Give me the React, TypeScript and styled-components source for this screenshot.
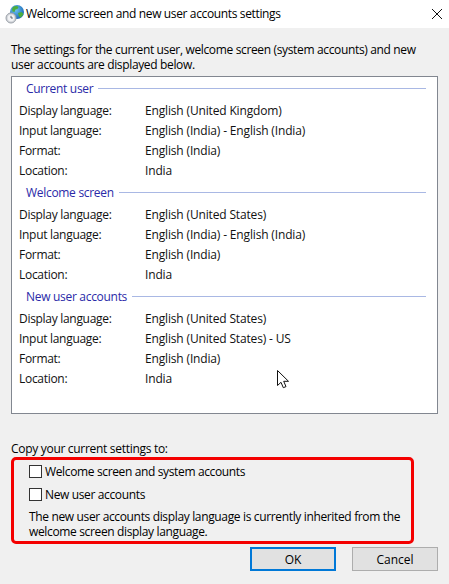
import styled, { createGlobalStyle } from 'styled-components';

const GlobalStyle = createGlobalStyle`
  html, body {
    margin: 0;
    padding: 0;
    background: #f0f0f0;
  }
  body {
    font-family: 'Open Sans', 'Noto Sans', 'Liberation Sans', sans-serif;
    font-size: 12px;
    color: #000;
  }
`;

interface GroupType {
  title: string;
  rows: [string, string][];
}

const groups: GroupType[] = [
  {
    title: 'Current user',
    rows: [
      ['Display language:', 'English (United Kingdom)'],
      ['Input language:', 'English (India) - English (India)'],
      ['Format:', 'English (India)'],
      ['Location:', 'India'],
    ],
  },
  {
    title: 'Welcome screen',
    rows: [
      ['Display language:', 'English (United States)'],
      ['Input language:', 'English (India) - English (India)'],
      ['Format:', 'English (India)'],
      ['Location:', 'India'],
    ],
  },
  {
    title: 'New user accounts',
    rows: [
      ['Display language:', 'English (United States)'],
      ['Input language:', 'English (United States) - US'],
      ['Format:', 'English (India)'],
      ['Location:', 'India'],
    ],
  },
];

const Dialog = styled.div`
  width: 449px;
  height: 584px;
  display: flex;
  flex-direction: column;
  overflow: hidden;
  background: #f0f0f0;
`;

const TitleBar = styled.div`
  height: 28px;
  flex: none;
  display: flex;
  align-items: center;
  background: #fff;
  padding: 0 7px 0 5px;
  gap: 1px;
`;

const TitleText = styled.span`
  flex: 1;
  line-height: 26px;
  letter-spacing: -0.36px;
`;

const Body = styled.div`
  flex: 1;
  display: flex;
  flex-direction: column;
  padding: 14px 11px 0;
`;

const Intro = styled.p`
  margin: 0 0 4px;
  line-height: 15px;
  letter-spacing: -0.35px;
  white-space: nowrap;
`;

const Panel = styled.div`
  height: 338px;
  box-sizing: border-box;
  flex: none;
  background: #fff;
  border: 1px solid #828790;
  padding: 1px 11px 0 7px;
`;

const GroupHeader = styled.div`
  height: 20px;
  margin-bottom: 3px;
  display: flex;
  align-items: center;
  gap: 5px;
  padding: 0 0 0 7px;
  color: #2a2aa8;
  letter-spacing: -0.3px;
`;

const GroupRule = styled.span`
  flex: 1;
  height: 1px;
  background: #a9b8e4;
`;

const Group = styled.section`
  margin-bottom: 1px;
`;

const Row = styled.div`
  display: grid;
  grid-template-columns: 126px 1fr;
  height: 20px;
  line-height: 20px;
  color: #111;
`;

const RowLabel = styled.span`
  letter-spacing: -0.3px;
`;

const RowValue = styled.span`
  letter-spacing: -0.16px;
`;

const Pointer = styled.svg`
  position: absolute;
  left: 277px;
  top: 370px;
`;

const CopyLabel = styled.div`
  margin-top: 27px;
  line-height: 16px;
  letter-spacing: -0.3px;
`;

const Highlight = styled.div`
  box-sizing: border-box;
  width: 403px;
  height: 87px;
  border: 3px solid #f40000;
  border-radius: 5px;
  padding: 3px 0 0 15px;
`;

const CheckRow = styled.label`
  display: flex;
  align-items: center;
  gap: 3px;
  height: 16px;
  margin-bottom: 7px;
  letter-spacing: -0.36px;
`;

const CheckBox = styled.span`
  box-sizing: border-box;
  flex: none;
  width: 13px;
  height: 13px;
  background: #fff;
  border: 1px solid #333;
`;

const Note = styled.p`
  margin: 0;
  line-height: 15px;
  letter-spacing: -0.35px;
  white-space: nowrap;
`;

const Buttons = styled.div`
  display: flex;
  justify-content: flex-end;
  gap: 16px;
  margin-top: 3px;
`;

const Button = styled.button<{ $primary?: boolean }>`
  box-sizing: border-box;
  width: 86px;
  height: 24px;
  padding: 0;
  font: inherit;
  color: #000;
  background: #e1e1e1;
  border: ${({ $primary }) => ($primary ? '2px solid #0078d7' : '1px solid #adadad')};
`;

function GlobeIcon() {
  return (
    <svg width="20" height="20" viewBox="0 0 20 20">
      <defs>
        <radialGradient id="globe" cx="0.4" cy="0.35" r="0.75">
          <stop offset="0" stopColor="#6fc3f2" />
          <stop offset="1" stopColor="#0f5fb0" />
        </radialGradient>
      </defs>
      <circle cx="12" cy="8" r="7" fill="url(#globe)" />
      <path d="M8 3c2-1.300 4-1.300 5.500 0l-1 2-2 .5-1 2.500-2-.5-.5-2.500zM13 9l3.500-1 2 2-2.500 3.500-2-1z" fill="#4cae3c" />
      <circle cx="6" cy="14" r="5" fill="#d5d8dc" stroke="#9aa0a8" />
      <circle cx="6" cy="14" r="3.200" fill="#f2f3f5" />
      <path d="M6 11.800V14h1.800" fill="none" stroke="#59626c" />
    </svg>
  );
}

function CloseIcon() {
  return (
    <svg width="10" height="10" viewBox="0 0 10 10">
      <path d="M0 0l10 10M10 0L0 10" stroke="#111" strokeWidth="1" />
    </svg>
  );
}

export default function App() {
  return (
    <Dialog>
      <GlobalStyle />
      <TitleBar>
        <GlobeIcon />
        <TitleText>Welcome screen and new user accounts settings</TitleText>
        <CloseIcon />
      </TitleBar>
      <Body>
        <Intro>
          The settings for the current user, welcome screen (system accounts) and new
          <br />
          user accounts are displayed below.
        </Intro>
        <Panel>
          {groups.map((group) => (
            <Group key={group.title}>
              <GroupHeader>
                {group.title}
                <GroupRule />
              </GroupHeader>
              {group.rows.map(([label, value]) => (
                <Row key={label}>
                  <RowLabel>{label}</RowLabel>
                  <RowValue>{value}</RowValue>
                </Row>
              ))}
            </Group>
          ))}
        </Panel>
        <CopyLabel>Copy your current settings to:</CopyLabel>
        <Highlight>
          <CheckRow>
            <CheckBox />
            Welcome screen and system accounts
          </CheckRow>
          <CheckRow>
            <CheckBox />
            New user accounts
          </CheckRow>
          <Note>
            The new user accounts display language is currently inherited from the
            <br />
            welcome screen display language.
          </Note>
        </Highlight>
        <Buttons>
          <Button $primary>OK</Button>
          <Button>Cancel</Button>
        </Buttons>
      </Body>
      <Pointer width="13" height="20" viewBox="0 0 13 20">
        <path d="M.5.5v15l3.500-3.200 2.300 5.400 2.700-1.100-2.300-5.300h4.800z" fill="#fff" stroke="#111" strokeWidth="1" />
      </Pointer>
    </Dialog>
  );
}
